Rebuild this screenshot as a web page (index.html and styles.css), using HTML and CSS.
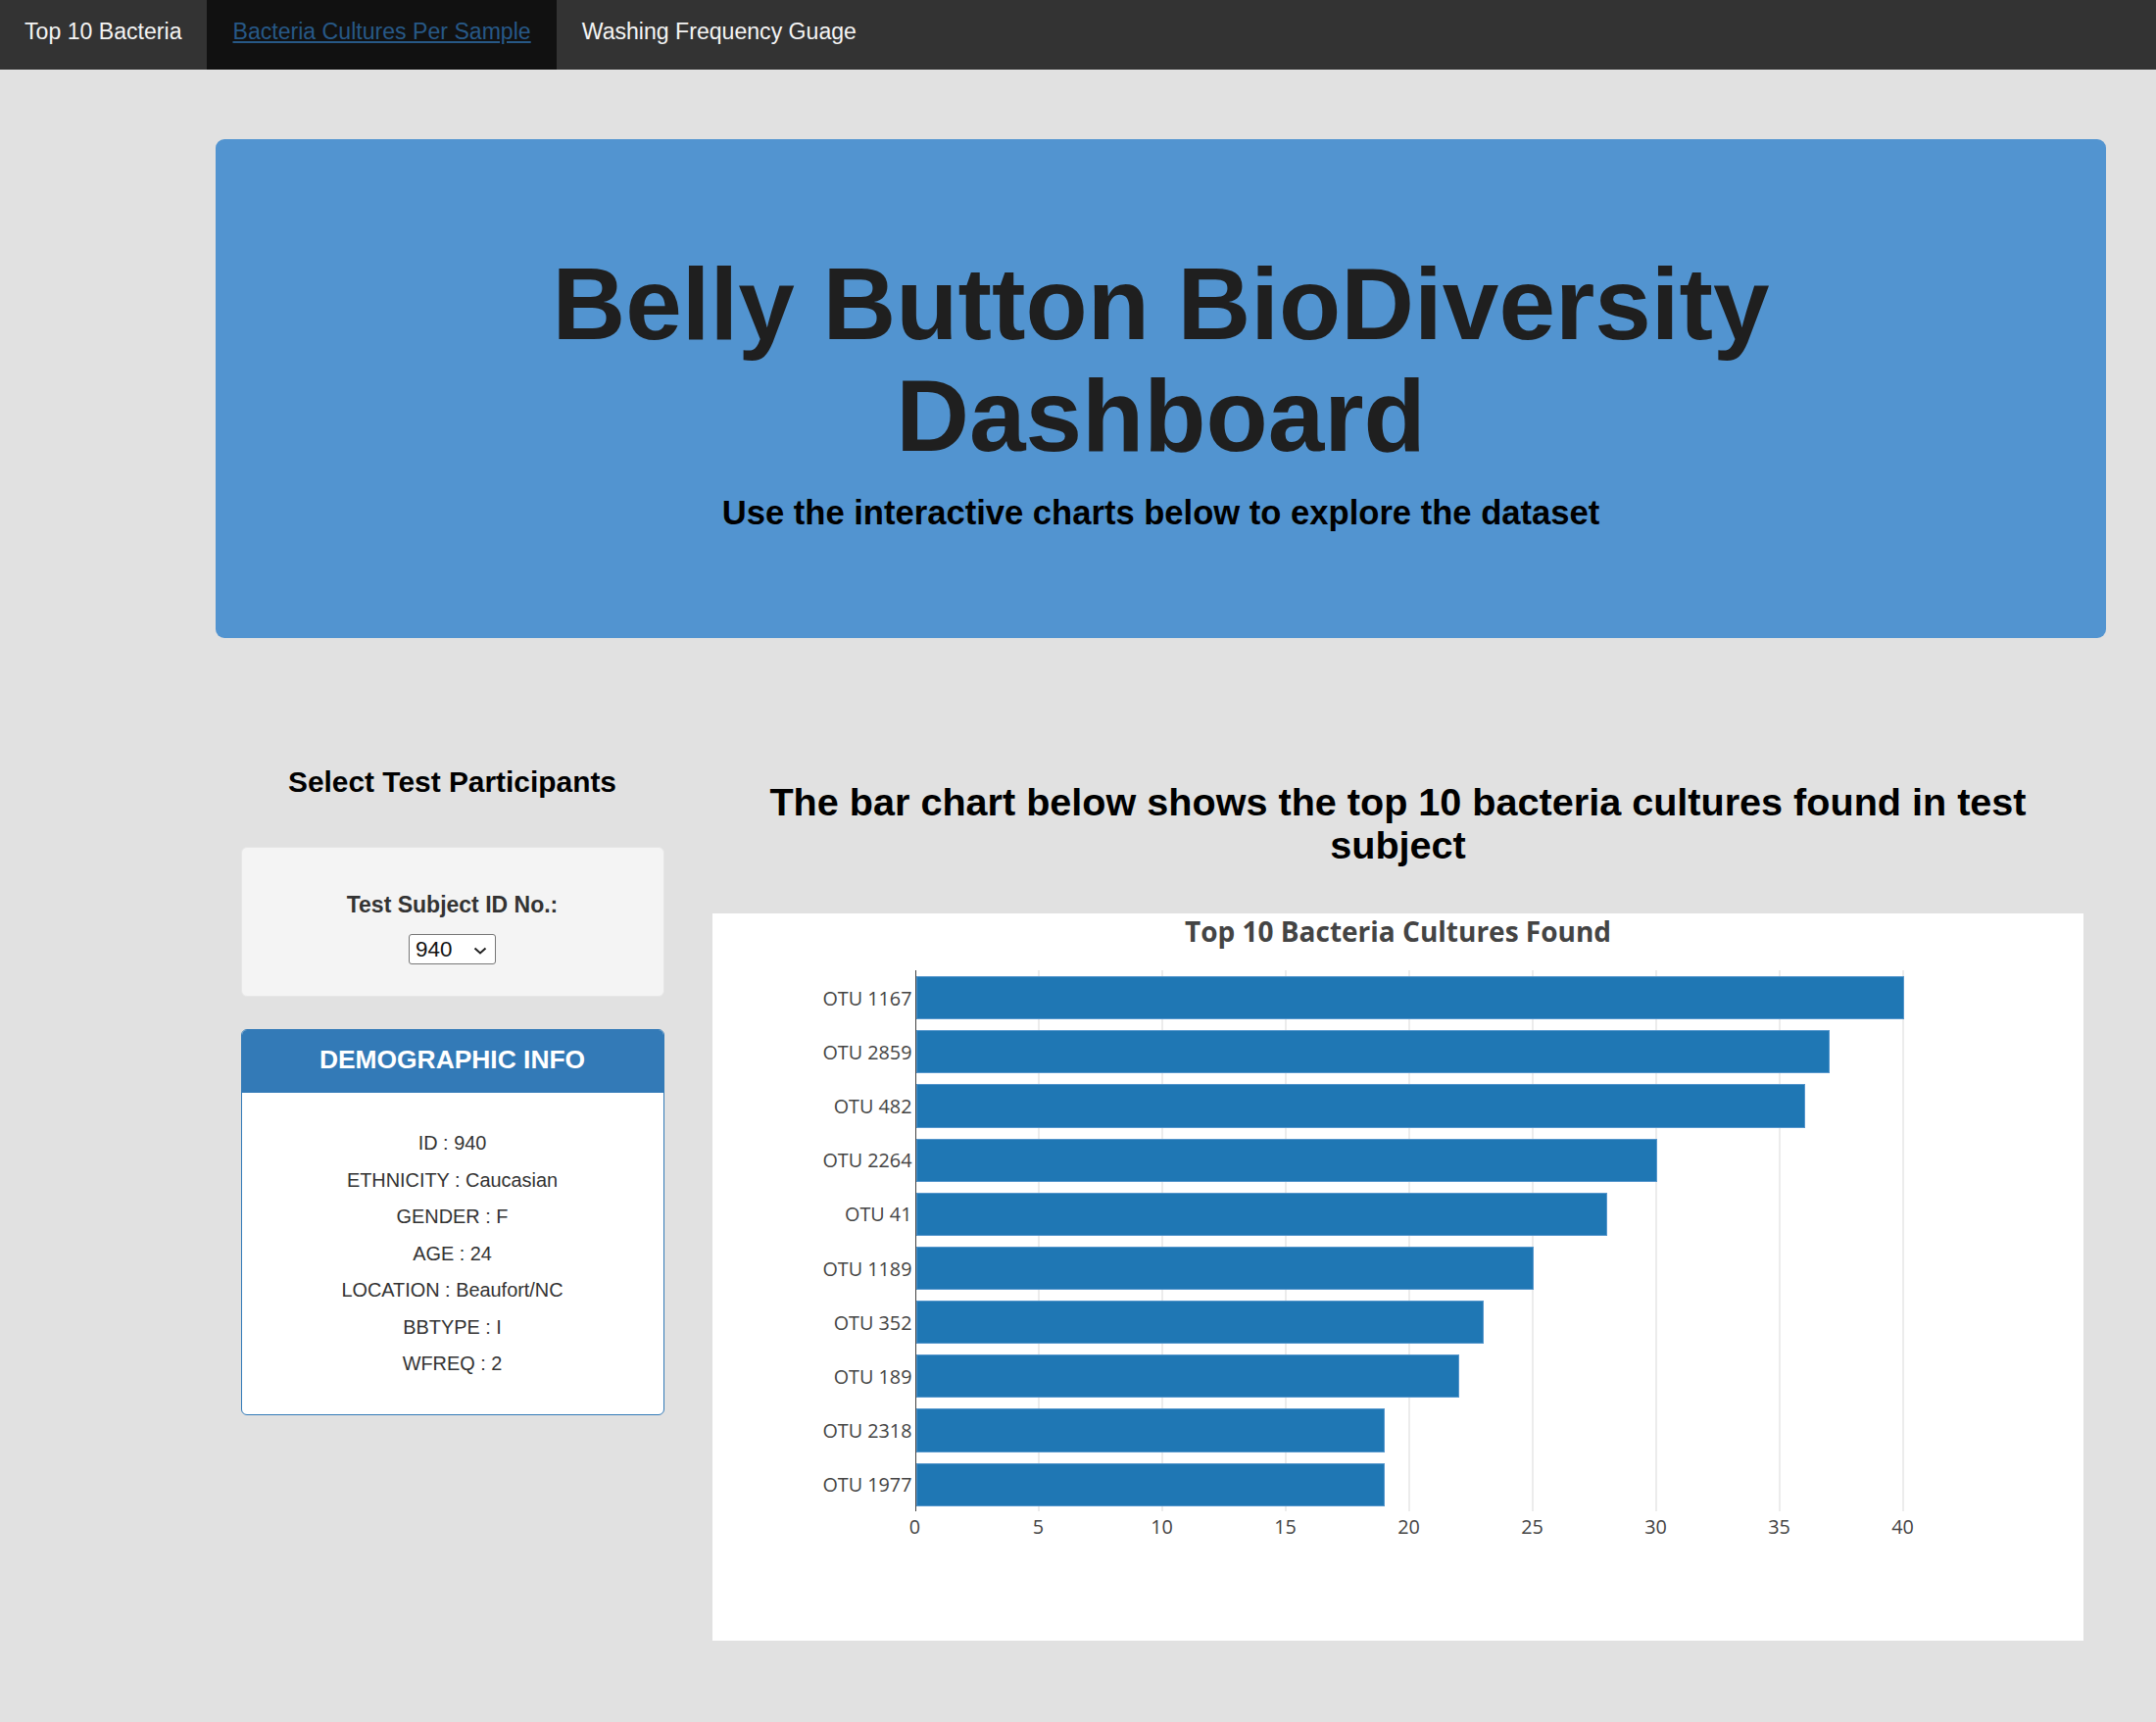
FILE: index.html
```html
<!DOCTYPE html>
<html lang="en">
<head>
<meta charset="utf-8">
<title>Belly Button BioDiversity Dashboard</title>
<link rel="stylesheet" href="styles.css">
</head>
<body>
<nav class="topnav">
  <a class="nav-item" href="#">Top 10 Bacteria</a>
  <a class="nav-item nav-item-active" href="#">Bacteria Cultures Per Sample</a>
  <a class="nav-item" href="#">Washing Frequency Guage</a>
</nav>

<header class="hero">
  <h1 class="hero-title">Belly Button BioDiversity Dashboard</h1>
  <h3 class="hero-sub">Use the interactive charts below to explore the dataset</h3>
</header>

<main class="main">
  <section class="side">
    <h4 class="side-title">Select Test Participants</h4>
    <div class="well">
      <div class="well-label">Test Subject ID No.:</div>
      <div class="select-box">
        <span class="select-value">940</span>
        <svg class="select-chevron" width="14" height="8" viewBox="0 0 14 8"><path d="M1.5 1.5 L7 6.5 L12.5 1.5" fill="none" stroke="#222" stroke-width="2"/></svg>
      </div>
    </div>
    <div class="panel">
      <div class="panel-head">DEMOGRAPHIC INFO</div>
      <div class="panel-body">
        <div class="info-row">ID : 940</div>
        <div class="info-row">ETHNICITY : Caucasian</div>
        <div class="info-row">GENDER : F</div>
        <div class="info-row">AGE : 24</div>
        <div class="info-row">LOCATION : Beaufort/NC</div>
        <div class="info-row">BBTYPE : I</div>
        <div class="info-row">WFREQ : 2</div>
      </div>
    </div>
  </section>

  <section class="content">
    <h3 class="content-title">The bar chart below shows the top 10 bacteria cultures found in test subject</h3>
    <div class="chart">
      <div class="chart-title">Top 10 Bacteria Cultures Found</div>
      <div class="plot-wrap">
        <div class="ylabels">
          <div class="ylabel">OTU 1167</div>
          <div class="ylabel">OTU 2859</div>
          <div class="ylabel">OTU 482</div>
          <div class="ylabel">OTU 2264</div>
          <div class="ylabel">OTU 41</div>
          <div class="ylabel">OTU 1189</div>
          <div class="ylabel">OTU 352</div>
          <div class="ylabel">OTU 189</div>
          <div class="ylabel">OTU 2318</div>
          <div class="ylabel">OTU 1977</div>
        </div>
        <div class="plot">
          <div class="bar-row"><div class="bar" style="width:1008px"></div></div>
          <div class="bar-row"><div class="bar" style="width:932.4px"></div></div>
          <div class="bar-row"><div class="bar" style="width:907.2px"></div></div>
          <div class="bar-row"><div class="bar" style="width:756px"></div></div>
          <div class="bar-row"><div class="bar" style="width:705.6px"></div></div>
          <div class="bar-row"><div class="bar" style="width:630px"></div></div>
          <div class="bar-row"><div class="bar" style="width:579.6px"></div></div>
          <div class="bar-row"><div class="bar" style="width:554.4px"></div></div>
          <div class="bar-row"><div class="bar" style="width:478.8px"></div></div>
          <div class="bar-row"><div class="bar" style="width:478.8px"></div></div>
        </div>
      </div>
      <div class="xticks">
        <span class="xtick">0</span>
        <span class="xtick">5</span>
        <span class="xtick">10</span>
        <span class="xtick">15</span>
        <span class="xtick">20</span>
        <span class="xtick">25</span>
        <span class="xtick">30</span>
        <span class="xtick">35</span>
        <span class="xtick">40</span>
      </div>
    </div>
  </section>
</main>
</body>
</html>
```

FILE: styles.css
```css
html, body {
  margin: 0;
  padding: 0;
}

body {
  background: #e1e1e1;
  font-family: "Liberation Sans", Arial, Helvetica, sans-serif;
  color: #333;
  min-height: 1757px;
}

/* ---------- top navigation ---------- */
.topnav {
  display: flex;
  height: 71px;
  background: #333333;
}

.nav-item {
  display: block;
  padding: 18px 26px 0 26px;
  font-size: 23.1px;
  line-height: 28px;
  color: #f4f4f4;
  text-decoration: none;
}

.nav-item:first-child {
  padding-left: 25px;
}

.nav-item-active {
  background: #111111;
  color: #275886;
  text-decoration: underline;
}

/* ---------- hero ---------- */
.hero {
  margin: 71px 51px 0 220px;
  height: 509px;
  box-sizing: border-box;
  padding: 112px 100px 0 100px;
  background: #5294d0;
  border-radius: 9px;
  text-align: center;
}

.hero-title {
  margin: 0;
  font-size: 103.5px;
  line-height: 1.1;
  font-weight: bold;
  color: #1f1f1f;
}

.hero-sub {
  margin: 22px 0 0 0;
  font-size: 34.6px;
  line-height: 1.1;
  font-weight: bold;
  color: #000;
}

/* ---------- main layout ---------- */
.main {
  display: flex;
  align-items: flex-start;
  gap: 49.5px;
  padding: 131px 0 0 245.5px;
}

.side {
  width: 432px;
  flex: none;
}

.side-title {
  margin: 0;
  font-size: 29.9px;
  line-height: 1.1;
  font-weight: bold;
  color: #000;
  text-align: center;
}

.well {
  margin-top: 49px;
  box-sizing: border-box;
  height: 153px;
  padding-top: 43px;
  background: #f4f4f4;
  border: 1px solid #e6e6e6;
  border-radius: 6px;
  display: flex;
  flex-direction: column;
  align-items: center;
}

.well-label {
  font-size: 23px;
  line-height: 31.4px;
  font-weight: bold;
  color: #333;
}

.select-box {
  margin-top: 14px;
  box-sizing: border-box;
  width: 89px;
  height: 31px;
  border: 1px solid #767676;
  border-radius: 3px;
  background: #fff;
  display: flex;
  align-items: center;
  justify-content: space-between;
  padding: 0 8px 0 6px;
}

.select-value {
  font-size: 22.4px;
  line-height: 29px;
  color: #111;
}

.select-chevron {
  display: block;
  margin-top: 2px;
}

.panel {
  margin-top: 33.5px;
  background: #fff;
  border: 1.5px solid #337ab7;
  border-radius: 6px;
  overflow: hidden;
}

.panel-head {
  background: #337ab7;
  color: #fff;
  font-size: 26.4px;
  line-height: 28.6px;
  font-weight: bold;
  text-align: center;
  padding: 16px 0 19px 0;
}

.panel-body {
  padding: 33.5px 0 32.5px 0;
  text-align: center;
}

.info-row {
  font-size: 19.9px;
  line-height: 37.5px;
  color: #333;
}

/* ---------- chart column ---------- */
.content {
  width: 1399px;
  flex: none;
}

.content-title {
  margin: 15.4px 0 0 0;
  font-size: 39.6px;
  line-height: 1.1;
  font-weight: bold;
  color: #000;
  text-align: center;
}

.chart {
  margin-top: 48px;
  height: 742px;
  box-sizing: border-box;
  padding-top: 3px;
  background: #fff;
}

.chart-title {
  font-family: "Open Sans", "Liberation Sans", sans-serif;
  font-weight: bold;
  font-size: 28px;
  line-height: 30px;
  color: #444;
  text-align: center;
}

.plot-wrap {
  margin-top: 25px;
  display: flex;
}

.ylabels {
  width: 206.5px;
  flex: none;
  display: flex;
  flex-direction: column;
}

.ylabel {
  height: 55.2px;
  display: flex;
  align-items: center;
  justify-content: flex-end;
  padding-right: 3px;
  font-family: "Open Sans", "Liberation Sans", sans-serif;
  font-size: 19.8px;
  color: #444;
}

.plot {
  width: 1061px;
  flex: none;
  box-sizing: border-box;
  border-left: 1.5px solid #444;
  background-image: repeating-linear-gradient(to right,
    transparent 0, transparent 124.5px,
    #ececec 124.5px, #ececec 126px);
  display: flex;
  flex-direction: column;
}

.bar-row {
  height: 55.2px;
  display: flex;
  align-items: center;
}

.bar {
  height: 44.2px;
  background: #1f77b4;
  box-shadow: inset 0 0 0 1px #5596cc;
}

.xticks {
  margin: 4.5px 0 0 143.5px;
  display: flex;
}

.xtick {
  width: 126px;
  flex: none;
  text-align: center;
  font-family: "Open Sans", "Liberation Sans", sans-serif;
  font-size: 19.8px;
  line-height: 22px;
  color: #444;
}
```
